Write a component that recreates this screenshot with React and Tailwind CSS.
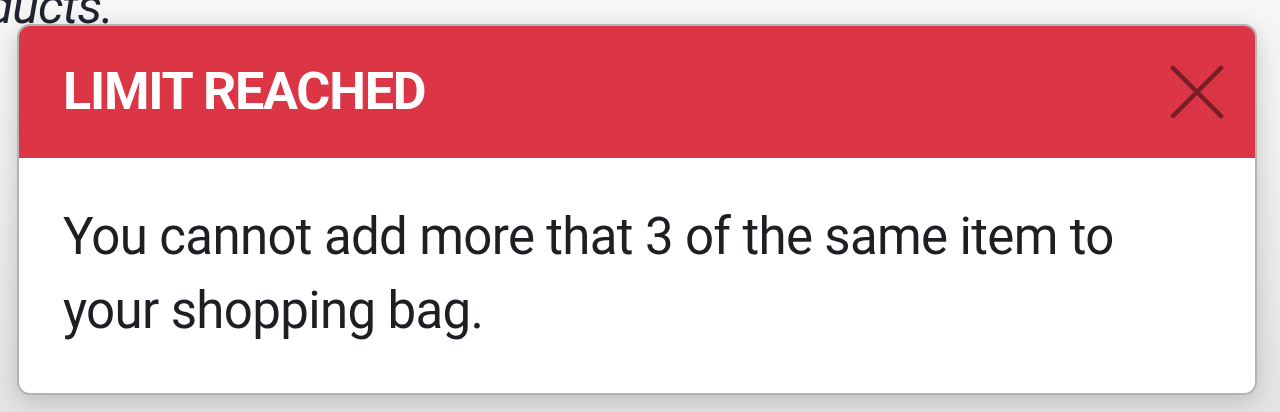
const CloseIcon = () => (
  <svg width="54" height="54" viewBox="0 0 54 54" fill="none" stroke="currentColor" strokeWidth="4.5" strokeLinecap="round">
    <path d="M3 3 L51 51 M51 3 L3 51" />
  </svg>
);

const LimitModal = () => {
  return (
    <div className="absolute left-[17px] top-[24px] w-[1240px] rounded-[13px] border-2 border-[#b4b4b4] bg-white shadow-[0_6px_24px_rgba(0,0,0,0.18)] overflow-hidden">
      <div className="h-[132px] bg-[#dc3545] flex items-center justify-between pl-[44px] pr-[31px]">
        <h2 className="text-white font-bold text-[52px] leading-none tracking-[-1.2px]">LIMIT REACHED</h2>
        <button className="text-[#6e1a22] p-0 opacity-90">
          <CloseIcon />
        </button>
      </div>
      <div className="pt-[42px] pb-[45px] px-[44px]">
        <p className="max-w-[1080px] text-[#1c1f23] text-[51px] leading-[74px] tracking-[-0.65px]">
          You cannot add more that 3 of the same item to your shopping bag.
        </p>
      </div>
    </div>
  );
};

const App = () => {
  return (
    <div className="relative w-[1280px] h-[412px] overflow-hidden bg-gradient-to-b from-[#f7f7f7] to-[#e4e4e4] font-['Roboto',sans-serif]">
      <p className="absolute -left-[14px] -top-[19px] italic text-[50px] leading-none tracking-[-1px] text-[#1f2430]">ducts.</p>
      <LimitModal />
    </div>
  );
};

export default App;
